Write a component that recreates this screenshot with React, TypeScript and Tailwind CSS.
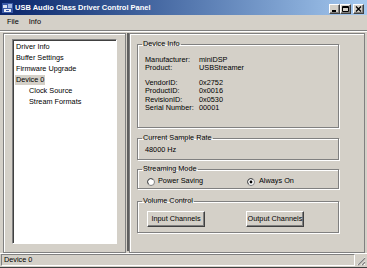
import React from "react";

const etched = "border border-[#808080] shadow-[1px_1px_0_#fff,inset_1px_1px_0_#fff]";
const raised =
  "border border-t-white border-l-white border-r-[#404040] border-b-[#404040] shadow-[inset_-1px_-1px_0_#808080]";

function CaptionButton({ kind }: { kind: "min" | "max" | "close" }) {
  return (
    <div className={`w-[11px] h-[10px] bg-[#d4d0c8] flex items-center justify-center ${raised}`}>
      <svg width="7" height="6" viewBox="0 0 7 6">
        {kind === "min" && <rect x="1" y="4" width="4" height="2" fill="#000" />}
        {kind === "max" && (
          <path d="M0.5 0.5h6v5h-6z M0.5 1.5h6" fill="none" stroke="#000" strokeWidth="1" />
        )}
        {kind === "close" && (
          <path d="M1 0.5l5 5M6 0.5l-5 5" stroke="#000" strokeWidth="1.3" />
        )}
      </svg>
    </div>
  );
}

function GroupBox({
  title,
  className,
  children,
}: {
  title: string;
  className: string;
  children: React.ReactNode;
}) {
  return (
    <fieldset className={`w-[202px] p-0 m-0 ${etched} ${className}`}>
      <legend className="ml-[4px] px-[1px] leading-[8px]">{title}</legend>
      {children}
    </fieldset>
  );
}

function Radio({ checked }: { checked?: boolean }) {
  return (
    <svg width="8" height="8" viewBox="0 0 8 8">
      <circle cx="4" cy="4" r="3.5" fill="#fff" stroke="#808080" strokeWidth="1" />
      <path d="M1.5 6A3 3 0 0 1 6 1.5" fill="none" stroke="#404040" strokeWidth="0.8" />
      {checked && <circle cx="4" cy="4" r="1.4" fill="#000" />}
    </svg>
  );
}

export default function App() {
  const tree = [
    { label: "Driver Info", indent: false },
    { label: "Buffer Settings", indent: false },
    { label: "Firmware Upgrade", indent: false },
    { label: "Device 0", indent: false, selected: true },
    { label: "Clock Source", indent: true },
    { label: "Stream Formats", indent: true },
  ];

  const info: [string, string][] = [
    ["Manufacturer:", "miniDSP"],
    ["Product:", "USBStreamer"],
  ];
  const ids: [string, string][] = [
    ["VendorID:", "0x2752"],
    ["ProductID:", "0x0016"],
    ["RevisionID:", "0x0530"],
    ["Serial Number:", "00001"],
  ];

  return (
    <div className="w-[367px] h-[268px] bg-[#d4d0c8] flex flex-col overflow-hidden text-[7.3px] text-black font-['Liberation_Sans',Arial,sans-serif]">
      {/* Title bar */}
      <div className="h-[15px] flex items-center pl-[2px] pr-[3px] bg-linear-to-r from-[#0a246a] to-[#a6caf0]">
        <svg width="11" height="10" viewBox="0 0 11 10">
          <rect x="0" y="0" width="11" height="10" fill="#3a5aa8" />
          <rect x="1" y="2" width="4" height="3" fill="#d8e0f0" />
          <rect x="6" y="1" width="4" height="4" fill="#9fb4e0" />
          <rect x="2" y="6" width="7" height="3" fill="#e8ecf6" />
          <rect x="4" y="7" width="3" height="1" fill="#3a5aa8" />
        </svg>
        <span className="ml-[2px] font-bold text-white text-[7.5px] leading-none">
          USB Audio Class Driver Control Panel
        </span>
        <div className="ml-auto flex items-center mt-[2px]">
          <CaptionButton kind="min" />
          <CaptionButton kind="max" />
          <div className="ml-[2px]">
            <CaptionButton kind="close" />
          </div>
        </div>
      </div>

      {/* Menu bar */}
      <div className="h-[15px] flex items-center gap-[10px] pl-[7px]">
        <span>File</span>
        <span>Info</span>
      </div>
      <div className="h-[2px] border-t border-[#808080] border-b border-b-white" />

      {/* Main area */}
      <div className="h-[221px] flex pt-[1px] pl-[3px] pr-[2px]">
        {/* Tree pane */}
        <div className="w-[123px] h-[220px] border border-[#808080] shadow-[inset_1px_1px_0_#fff] pt-[5px] pl-[8px] pr-[8px] pb-[8px]">
          <div className="h-full bg-white border border-t-[#808080] border-l-[#808080] border-r-white border-b-white shadow-[inset_1px_1px_0_#404040] pl-[2px] pt-[1px]">
            {tree.map((t) => (
              <div key={t.label} className={`h-[11px] flex items-center ${t.indent ? "pl-[13px]" : ""}`}>
                <span className={`px-[1px] leading-[10px] ${t.selected ? "bg-[#d4d0c8]" : ""}`}>{t.label}</span>
              </div>
            ))}
          </div>
        </div>

        {/* Splitter */}
        <div className="w-[2px] h-[218px] bg-[#5e5e5e] ml-[1px]" />

        {/* Right pane */}
        <div className="flex-1 h-[220px] border border-[#808080] shadow-[inset_1px_1px_0_#fff] pl-[7px] pt-[6px] flex flex-col">
          <GroupBox title="Device Info" className="h-[88px]">
            <div className="pl-[7px] pt-[8px] leading-[8.4px]">
              {info.map(([k, v]) => (
                <div key={k} className="flex">
                  <span className="w-[54px]">{k}</span>
                  <span>{v}</span>
                </div>
              ))}
              <div className="h-[6px]" />
              {ids.map(([k, v]) => (
                <div key={k} className="flex">
                  <span className="w-[54px]">{k}</span>
                  <span>{v}</span>
                </div>
              ))}
            </div>
          </GroupBox>

          <GroupBox title="Current Sample Rate" className="h-[26px] mt-[6px]">
            <div className="pl-[7px] pt-[4px] leading-[8px]">48000 Hz</div>
          </GroupBox>

          <GroupBox title="Streaming Mode" className="h-[24px] mt-[5px]">
            <div className="pl-[9px] pt-[4px] flex items-center h-[13px]">
              <div className="w-[100px] flex items-center gap-[3px]">
                <Radio />
                <span>Power Saving</span>
              </div>
              <div className="flex items-center gap-[4px]">
                <Radio checked />
                <span>Always On</span>
              </div>
            </div>
          </GroupBox>

          <GroupBox title="Volume Control" className="h-[36px] mt-[8px]">
            <div className="pl-[9px] pt-[6px] flex gap-[41px]">
              <button className={`w-[58px] h-[16px] bg-[#d4d0c8] flex items-center justify-center ${raised}`}>
                Input Channels
              </button>
              <button className={`w-[58px] h-[16px] bg-[#d4d0c8] flex items-center justify-center ${raised}`}>
                Output Channels
              </button>
            </div>
          </GroupBox>
        </div>
      </div>

      {/* Status bar */}
      <div className="h-[15px] flex border-t border-white px-[1px] pb-[1px] border-b border-b-[#404040]">
        <div className="flex-1 flex items-center pl-[2px] border border-t-[#808080] border-l-[#808080] border-r-white border-b-white">
          Device 0
        </div>
        <svg width="11" height="11" viewBox="0 0 11 11" className="self-end">
          <path d="M10 2L2 10M10 6L6 10M10 9L9 10" stroke="#fff" strokeWidth="1" />
          <path d="M10 3L3 10M10 7L7 10" stroke="#808080" strokeWidth="1.2" />
        </svg>
      </div>
    </div>
  );
}
